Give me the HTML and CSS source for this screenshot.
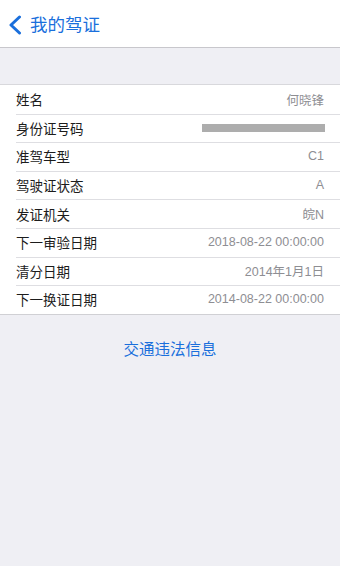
FILE: index.html
```html
<!DOCTYPE html>
<html lang="zh">
<head>
<meta charset="utf-8">
<title>我的驾证</title>
<link rel="stylesheet" href="styles.css">
</head>
<body>
<header class="nav">
  <svg class="back" width="16" height="20" viewBox="0 0 16 20"><path d="M12.5 2 L4 10 L12.5 18" fill="none" stroke="#1a6fdc" stroke-width="3" stroke-linecap="round" stroke-linejoin="round"/></svg>
  <span class="title">我的驾证</span>
</header>
<div class="gap"></div>
<ul class="list">
  <li class="row"><span class="label">姓名</span><span class="value">何晓锋</span></li>
  <li class="row"><span class="label">身份证号码</span><span class="blur"></span></li>
  <li class="row"><span class="label">准驾车型</span><span class="value">C1</span></li>
  <li class="row"><span class="label">驾驶证状态</span><span class="value">A</span></li>
  <li class="row"><span class="label">发证机关</span><span class="value">皖N</span></li>
  <li class="row"><span class="label">下一审验日期</span><span class="value">2018-08-22 00:00:00</span></li>
  <li class="row"><span class="label">清分日期</span><span class="value">2014年1月1日</span></li>
  <li class="row"><span class="label">下一换证日期</span><span class="value">2014-08-22 00:00:00</span></li>
</ul>
<div class="link">交通违法信息</div>
</body>
</html>
```
FILE: styles.css
```css
* { box-sizing: border-box; }
html, body {
  margin: 0;
  padding: 0;
  height: 100%;
}
body {
  background: #efeff4;
  font-family: "Noto Sans CJK SC", "Liberation Sans", sans-serif;
  width: 340px;
  min-height: 566px;
}
.nav {
  height: 48px;
  background: #ffffff;
  border-bottom: 1px solid #c8c7cc;
  display: flex;
  align-items: center;
  padding-left: 7px;
  gap: 7px;
}
.back { display: block; margin-top: 3px; }
.title {
  color: #1a6fdc;
  font-size: 17.5px;
  line-height: 1;
}
.gap { height: 36px; }
.list {
  list-style: none;
  margin: 0;
  padding: 0;
  background: #ffffff;
  border-top: 1px solid #d8d8dc;
  border-bottom: 1px solid #d0d0d4;
}
.row {
  position: relative;
  height: 28.6px;
  display: flex;
  align-items: center;
  justify-content: space-between;
  padding: 0 16px;
}
.row + .row::before {
  content: "";
  position: absolute;
  left: 16px;
  right: 0;
  top: 0;
  height: 1px;
  background: #dedee2;
}
.label {
  font-size: 13.5px;
  color: #1c1c1c;
}
.value {
  font-size: 12.5px;
  color: #8e8e93;
  font-family: "Liberation Sans", "Noto Sans CJK SC", sans-serif;
}
.blur {
  width: 123px;
  height: 8px;
  background: #adadad;
  margin-right: -1px;
}
.link {
  text-align: center;
  color: #1a6fdc;
  font-size: 15.5px;
  margin-top: 22px;
}
```
